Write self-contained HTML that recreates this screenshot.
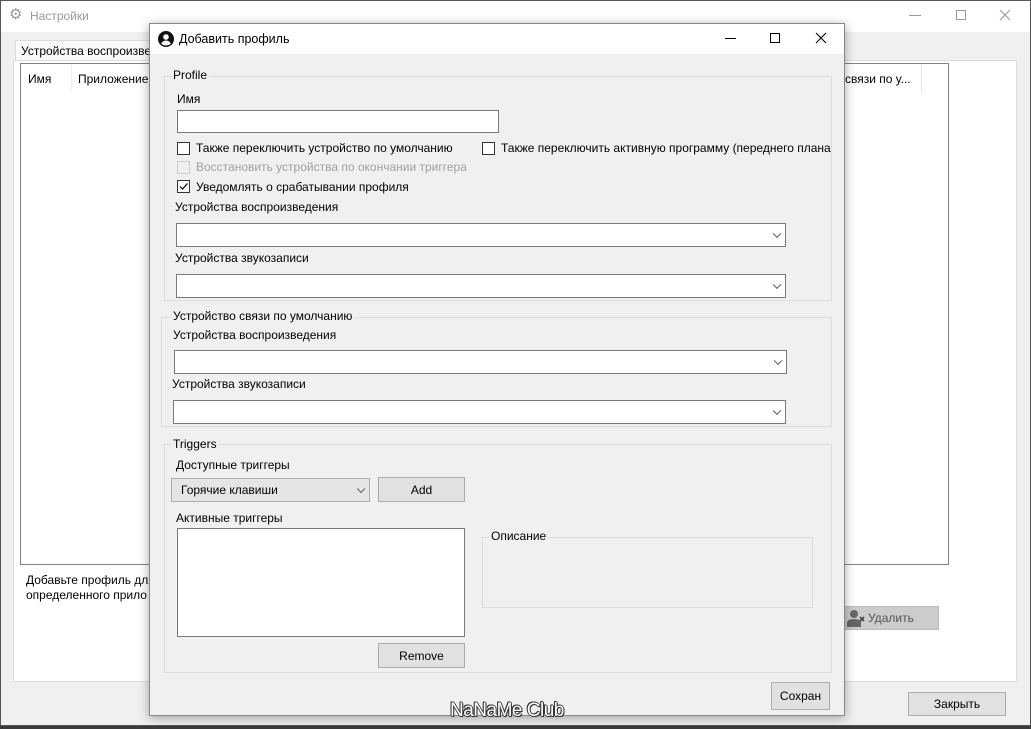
<!DOCTYPE html>
<html><head><meta charset="utf-8">
<style>
*{box-sizing:border-box;margin:0;padding:0}
body{width:1031px;height:729px;overflow:hidden;background:#3a3a3a;font-family:"Liberation Sans",sans-serif;font-size:12px;color:#000;position:relative}
.a{position:absolute}
.t{position:absolute;white-space:nowrap;line-height:14px}
.cb{position:absolute;width:13px;height:13px;border:1px solid #333;background:#fff}
.combo{position:absolute;background:#fff;border:1px solid #7a7a7a}
.combo:after{content:"";position:absolute;right:5px;top:50%;width:5px;height:5px;border-right:1px solid #555;border-bottom:1px solid #555;transform:translateY(-70%) rotate(45deg)}
.grp{position:absolute;border:1px solid #dcdcdc}
.gl{position:absolute;background:#f0f0f0;padding:0 2px;line-height:14px;white-space:nowrap}
.btn{position:absolute;background:#e1e1e1;border:1px solid #adadad;text-align:center;display:flex;align-items:center;justify-content:center}
</style></head><body>
<div class="a" style="left:0;top:0;width:1031px;height:726px;background:#f0f0f0;border:1px solid #555"></div>
<div class="a" style="left:1px;top:1px;width:1029px;height:31px;background:#fff"></div>
<div class="t" style="left:9px;top:8px;color:#999;font-size:15px">&#9881;</div>
<div class="t" style="left:30px;top:9px;color:#999">Настройки</div>
<div class="a" style="left:909px;top:15px;width:12px;height:1px;background:#999"></div>
<div class="a" style="left:956px;top:10px;width:10px;height:10px;border:1px solid #999"></div>
<svg class="a" style="left:999px;top:9px" width="12" height="12"><path d="M1 1L11 11M11 1L1 11" stroke="#999" stroke-width="1.1"/></svg>
<div class="a" style="left:15px;top:40px;width:140px;height:21px;background:#fafafa;border:1px solid #dcdcdc;border-bottom:none"></div>
<div class="t" style="left:21px;top:44px">Устройства воспроизве</div>
<div class="a" style="left:13px;top:60px;width:1004px;height:622px;background:#fff;border:1px solid #dcdcdc"></div>
<div class="a" style="left:20px;top:63px;width:929px;height:502px;background:#fff;border:1px solid #828282"></div>
<div class="t" style="left:28px;top:72px">Имя</div>
<div class="a" style="left:71px;top:64px;width:1px;height:28px;background:#f0f0f0"></div>
<div class="t" style="left:78px;top:72px">Приложение</div>
<div class="t" style="left:845px;top:72px">связи по у...</div>
<div class="a" style="left:921px;top:64px;width:1px;height:28px;background:#e5e5e5"></div>
<div class="t" style="left:26px;top:573px">Добавьте профиль для</div>
<div class="t" style="left:26px;top:588px">определенного прило</div>
<div class="btn" style="left:840px;top:606px;width:99px;height:24px;background:#ccc;border-color:#bbb;color:#555;justify-content:flex-start;padding-left:6px">
<svg width="18" height="18" viewBox="0 0 18 18"><circle cx="7" cy="5" r="4" fill="#666"/><path d="M0 18v-4c0-3 3-4 7-4s7 1 7 4v4z" fill="#666"/><path d="M13 8l4 4M17 8l-4 4" stroke="#444" stroke-width="1.6"/></svg><span style="margin-left:3px">Удалить</span></div>
<div class="btn" style="left:908px;top:692px;width:98px;height:24px">Закрыть</div>

<div class="a" style="left:149px;top:23px;width:696px;height:693px;background:#f0f0f0;border:1px solid #888;box-shadow:0 2px 10px rgba(0,0,0,.35)"></div>
<div class="a" style="left:150px;top:24px;width:694px;height:30px;background:#fff"></div>
<svg class="a" style="left:158px;top:31px" width="16" height="16" viewBox="0 0 16 16"><circle cx="8" cy="8" r="8" fill="#111"/><circle cx="8" cy="6" r="2.8" fill="#fff"/><path d="M3.2 12.5c1-2 2.8-3 4.8-3s3.8 1 4.8 3c-1.2 1.3-2.9 2-4.8 2s-3.6-.7-4.8-2z" fill="#fff"/></svg>
<div class="t" style="left:179px;top:32px;font-size:12.5px">Добавить профиль</div>
<div class="a" style="left:725px;top:38px;width:11px;height:1px;background:#000"></div>
<div class="a" style="left:770px;top:33px;width:10px;height:10px;border:1px solid #000"></div>
<svg class="a" style="left:815px;top:32px" width="12" height="12"><path d="M1 1L11 11M11 1L1 11" stroke="#000" stroke-width="1.1"/></svg>

<div class="grp" style="left:164px;top:76px;width:668px;height:225px"></div>
<div class="gl" style="left:171px;top:68px">Profile</div>
<div class="t" style="left:177px;top:92px">Имя</div>
<div class="a" style="left:177px;top:110px;width:322px;height:23px;background:#fff;border:1px solid #7a7a7a"></div>
<div class="cb" style="left:177px;top:142px"></div>
<div class="t" style="left:196px;top:141px">Также переключить устройство по умолчанию</div>
<div class="cb" style="left:482px;top:142px"></div>
<div class="t" style="left:501px;top:141px">Также переключить активную программу (переднего плана</div>
<div class="cb" style="left:177px;top:161px;border-color:#ccc;background:#f0f0f0"></div>
<div class="t" style="left:196px;top:160px;color:#a0a0a0">Восстановить устройства по окончании триггера</div>
<div class="cb" style="left:177px;top:180px"><svg width="11" height="11" style="position:absolute;left:0;top:0"><path d="M2 5.5l2.5 2.5L9.5 2.5" stroke="#000" fill="none" stroke-width="1.2"/></svg></div>
<div class="t" style="left:196px;top:180px">Уведомлять о срабатывании профиля</div>
<div class="t" style="left:175px;top:200px">Устройства воспроизведения</div>
<div class="combo" style="left:176px;top:223px;width:610px;height:24px"></div>
<div class="t" style="left:175px;top:251px">Устройства звукозаписи</div>
<div class="combo" style="left:176px;top:274px;width:610px;height:24px"></div>

<div class="grp" style="left:161px;top:317px;width:671px;height:110px"></div>
<div class="gl" style="left:171px;top:309px">Устройство связи по умолчанию</div>
<div class="t" style="left:173px;top:328px">Устройства воспроизведения</div>
<div class="combo" style="left:174px;top:350px;width:613px;height:24px"></div>
<div class="t" style="left:172px;top:377px">Устройства звукозаписи</div>
<div class="combo" style="left:173px;top:400px;width:613px;height:24px"></div>

<div class="grp" style="left:164px;top:444px;width:668px;height:229px"></div>
<div class="gl" style="left:171px;top:437px">Triggers</div>
<div class="t" style="left:176px;top:458px">Доступные триггеры</div>
<div class="combo" style="left:171px;top:478px;width:199px;height:24px;background:#e5e5e5;border-color:#adadad"></div>
<div class="t" style="left:181px;top:483px">Горячие клавиши</div>
<div class="btn" style="left:378px;top:477px;width:87px;height:25px">Add</div>
<div class="t" style="left:176px;top:511px">Активные триггеры</div>
<div class="a" style="left:177px;top:528px;width:288px;height:109px;background:#fff;border:1px solid #7a7a7a"></div>
<div class="btn" style="left:378px;top:643px;width:87px;height:25px">Remove</div>
<div class="grp" style="left:482px;top:537px;width:331px;height:71px"></div>
<div class="gl" style="left:489px;top:529px">Описание</div>
<div class="btn" style="left:771px;top:682px;width:59px;height:28px">Сохран</div>

<div class="t" style="left:450px;top:701px;font-size:19px;line-height:20px;color:#fff;letter-spacing:-0.5px;text-shadow:1px 0 #333,-1px 0 #333,0 1px #333,0 -1px #333,1px 1px #333,-1px -1px #333">NaNaMe Club</div>
</body></html>
